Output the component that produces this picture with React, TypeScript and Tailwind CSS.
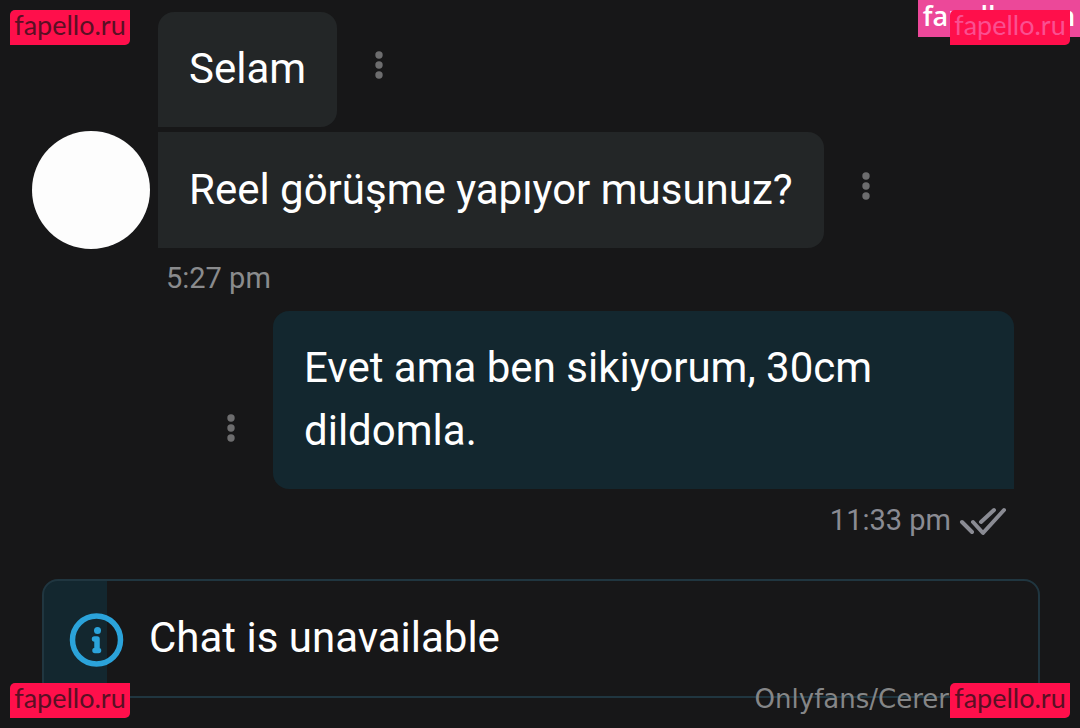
import type { ReactNode } from "react";

function MoreButton() {
  return (
    <button type="button" aria-label="Message options" className="shrink-0 px-2">
      <svg width="8" height="28" viewBox="0 0 8 28" fill="#6d6d6e" aria-hidden="true">
        <circle cx="4" cy="4" r="3.7" />
        <circle cx="4" cy="14" r="3.7" />
        <circle cx="4" cy="24" r="3.7" />
      </svg>
    </button>
  );
}

function Bubble({ className, children }: { className: string; children: ReactNode }) {
  return <p className={`px-[31px] text-[42px] leading-[63px] ${className}`}>{children}</p>;
}

function Tag({ className, textClassName }: { className: string; textClassName: string }) {
  return (
    <span
      className={`absolute flex h-[35px] w-[120px] justify-center bg-[#ff0f4b] font-['Lato',sans-serif] text-[27px] leading-[30px] ${className}`}
    >
      <span className={textClassName}>fapello.ru</span>
    </span>
  );
}

export default function App() {
  return (
    <main className="relative min-h-screen overflow-hidden bg-[#171718] pt-3 pb-[30px] font-['Roboto',sans-serif] text-white">
      <section className="flex items-center gap-[30px] pr-8 pl-[158px]">
        <Bubble className="rounded-t-2xl rounded-br-2xl bg-[#232627] pt-[25px] pb-[27px]">Selam</Bubble>
        <div className="pb-[2px]">
          <MoreButton />
        </div>
      </section>
      <section className="mt-1 flex items-center pl-8">
        <div className="mr-2 size-[118px] shrink-0 rounded-full bg-[#fdfdfd]" />
        <Bubble className="rounded-r-2xl bg-[#232627] pt-[26px] pb-[27px]">Reel görüşme yapıyor musunuz?</Bubble>
        <div className="ml-[30px] pb-[2px]">
          <MoreButton />
        </div>
      </section>
      <time className="mt-[11px] block pl-[166px] text-[29px] leading-9 text-[#8a8b8d]">5:27 pm</time>

      <section className="mt-[15px] flex items-end justify-end gap-[30px] pr-[66px] pl-[219px]">
        <div className="pb-10">
          <MoreButton />
        </div>
        <Bubble className="flex-1 rounded-t-2xl rounded-bl-2xl bg-[#13272f] pt-[25px] pb-[27px]">
          Evet ama ben sikiyorum, 30cm dildomla.
        </Bubble>
      </section>
      <div className="mt-[13px] flex items-center justify-end gap-2 pr-[73px] text-[29px] leading-9 text-[#8a8b93]">
        <time>11:33 pm</time>
        <svg
          width="48"
          height="32"
          viewBox="0 0 48 32"
          fill="none"
          stroke="currentColor"
          strokeWidth="4"
          strokeLinecap="round"
          strokeLinejoin="round"
          aria-label="Read"
        >
          <path d="M3 18l10 10M14 18l10 11L45 6M22 18L35 6" />
        </svg>
      </div>

      <section
        role="status"
        className="mt-[41px] mr-10 ml-[42px] flex h-[119px] items-center overflow-hidden rounded-2xl border-2 border-[#203640] bg-[linear-gradient(to_right,#13272f_63px,transparent_63px)] pl-6 text-[42px] leading-[63px]"
      >
        <svg width="56" height="56" viewBox="0 0 56 56" fill="none" className="shrink-0" aria-hidden="true">
          <circle cx="28.500" cy="29" r="24" stroke="#2ba3da" strokeWidth="5.500" />
          <circle cx="29.500" cy="19.500" r="3.500" fill="#2ba3da" />
          <path d="M26.500 28h2.500v11M27 39.500h3.500" stroke="#2ba3da" strokeWidth="5.500" strokeLinecap="round" strokeLinejoin="round" />
        </svg>
        <span className="ml-[25px] pb-[2px]">Chat is unavailable</span>
      </section>

      <span className="absolute top-0 right-0 flex h-[37px] w-[162px] justify-center bg-[#ec4899] font-['Open_Sans',sans-serif] text-[27px] leading-[32px] font-semibold">
        fapello.com
      </span>
      <Tag className="top-[10px] left-[10px] rounded-tl-[5px] rounded-br-[5px]" textClassName="text-[#5a1024]" />
      <Tag className="top-[10px] right-[10px] rounded-tl-[5px] rounded-br-[5px]" textClassName="text-[#fa4f91]" />
      <Tag className="bottom-[10px] left-[10px] rounded-tl-[5px] rounded-br-[5px]" textClassName="text-[#5a1024]" />
      <Tag className="right-[10px] bottom-[10px] rounded-tl-[5px] rounded-br-[5px]" textClassName="text-[#5a1024]" />
      <span className="absolute right-[131px] bottom-[11px] font-['DejaVu_Sans',sans-serif] text-[26px] leading-9 text-[#858687]">
        Onlyfans/Cerer
      </span>
    </main>
  );
}
